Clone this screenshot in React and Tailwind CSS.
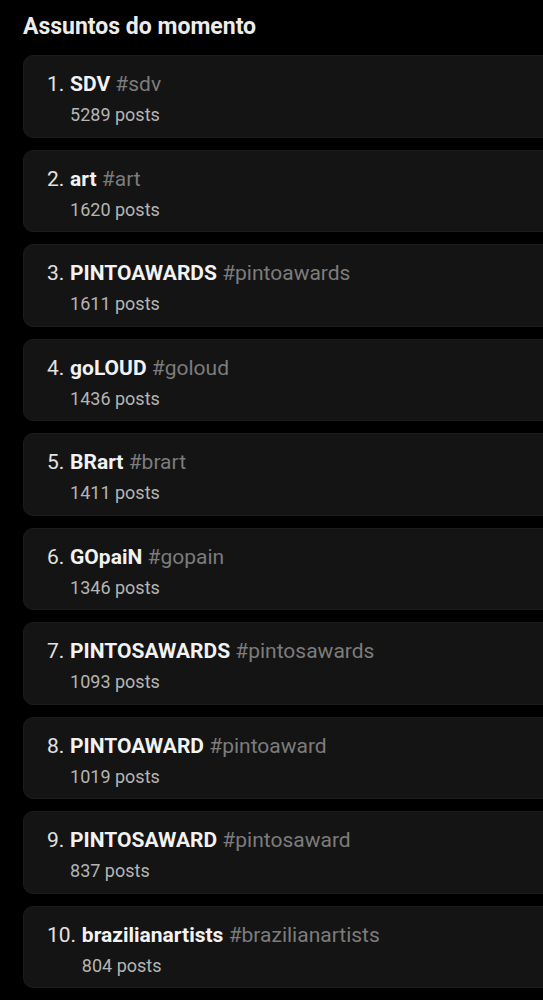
import React from 'react';

const topics = [
  { name: 'SDV', tag: '#sdv', posts: 5289 },
  { name: 'art', tag: '#art', posts: 1620 },
  { name: 'PINTOAWARDS', tag: '#pintoawards', posts: 1611 },
  { name: 'goLOUD', tag: '#goloud', posts: 1436 },
  { name: 'BRart', tag: '#brart', posts: 1411 },
  { name: 'GOpaiN', tag: '#gopain', posts: 1346 },
  { name: 'PINTOSAWARDS', tag: '#pintosawards', posts: 1093 },
  { name: 'PINTOAWARD', tag: '#pintoaward', posts: 1019 },
  { name: 'PINTOSAWARD', tag: '#pintosaward', posts: 837 },
  { name: 'brazilianartists', tag: '#brazilianartists', posts: 804 },
];

const TopicCard = ({ index, topic }) => (
  <div className="h-[82.5px] -mr-6 rounded-[10px] bg-[#141414] border border-[#1c1c1c] pl-[23px] pt-[16px]">
    <div className="flex gap-[5.7px]">
      <span className="text-[21px] leading-[24px] text-[#e2e2e2]">{index}.</span>
      <div>
        <div className="text-[21px] leading-[24px] whitespace-nowrap">
          <span className="font-bold text-[#f2f2f2]">{topic.name}</span>{' '}
          <span className="text-[#7c7c7c]">{topic.tag}</span>
        </div>
        <div className="mt-[7px] text-[18px] leading-[24px] text-[#b4b4b4]">{topic.posts} posts</div>
      </div>
    </div>
  </div>
);

export default function App() {
  return (
    <div className="min-h-[1000px] w-full overflow-hidden bg-black font-['Roboto',sans-serif]">
      <div className="pl-[23px] pt-[12px]">
        <h1 className="text-[23px] leading-[30px] font-bold text-[#ececec]">Assuntos do momento</h1>
        <div className="mt-[13px] flex flex-col gap-3">
          {topics.map((t, i) => (
            <TopicCard key={t.tag} index={i + 1} topic={t} />
          ))}
        </div>
      </div>
    </div>
  );
}
